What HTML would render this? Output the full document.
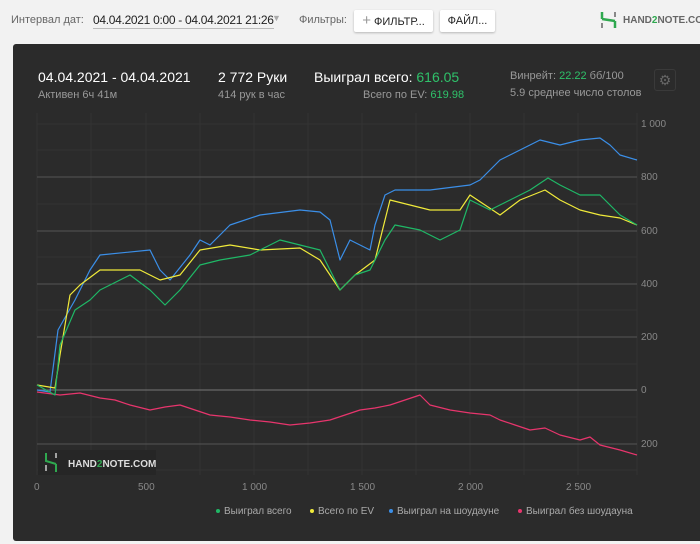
<!DOCTYPE html>
<html><head><meta charset="utf-8"><style>
body{margin:0;width:700px;height:544px;background:#f2f2f2;font-family:"Liberation Sans",sans-serif;position:relative;overflow:hidden}
.a{position:absolute;white-space:nowrap}
.btn{position:absolute;background:#fff;border-radius:2px;box-shadow:0 1px 2px rgba(0,0,0,.25);font-size:11px;color:#222;height:22px;line-height:22px;text-align:center}
.panel{position:absolute;left:13px;top:44px;width:690px;height:497px;background:#2b2b2b;border-radius:3px}
.g{color:#2fc16a}
</style></head><body>
<div class="a" style="left:11px;top:14px;font-size:11px;color:#666">Интервал дат:</div>
<div class="a" style="left:93px;top:13px;font-size:12px;color:#222;border-bottom:1px solid #bbb;padding-bottom:1px;letter-spacing:-0.3px">04.04.2021 0:00 - 04.04.2021 21:26</div>
<div class="a" style="left:272px;top:13px;font-size:9px;color:#aaa">▼</div>
<div class="a" style="left:299px;top:14px;font-size:11px;color:#666">Фильтры:</div>
<div class="btn" style="left:354px;top:10px;width:79px"><span style="color:#999;font-size:15px">+</span> ФИЛЬТР...</div>
<div class="btn" style="left:440px;top:10px;width:55px">ФАЙЛ...</div>
<svg class="a" style="left:600px;top:11px" width="18" height="18" viewBox="0 0 18 18"><path d="M2 1v7M2 8h0L15 10M15 10v7" stroke="#2fa84f" stroke-width="2.5" fill="none"/><path d="M2 12v5M15 1v5" stroke="#888" stroke-width="2"/></svg>
<div class="a" style="left:623px;top:15px;font-size:10px;color:#666;font-weight:bold">HAND<span style="color:#2fa84f">2</span>NOTE.COM</div>
<div class="panel"></div>
<div class="a" style="left:38px;top:69px;font-size:14px;color:#fff">04.04.2021 - 04.04.2021</div>
<div class="a" style="left:38px;top:89px;font-size:11px;color:#999">Активен 6ч 41м</div>
<div class="a" style="left:218px;top:69px;font-size:14px;color:#fff">2 772 Руки</div>
<div class="a" style="left:218px;top:89px;font-size:11px;color:#999">414 рук в час</div>
<div class="a" style="left:314px;top:69px;font-size:14px;color:#fff">Выиграл всего: <span class="g">616.05</span></div>
<div class="a" style="left:363px;top:89px;font-size:11px;color:#999">Всего по EV: <span class="g">619.98</span></div>
<div class="a" style="left:510px;top:70px;font-size:11px;color:#999">Винрейт: <span class="g">22.22</span> бб/100</div>
<div class="a" style="left:510px;top:87px;font-size:11px;color:#999">5.9 среднее число столов</div>
<div class="a" style="left:654px;top:69px;width:20px;height:20px;border:1px solid #3a3a3a;border-radius:3px;color:#666;font-size:14px;text-align:center;line-height:20px">⚙</div>
<svg class="a" style="left:0;top:0" width="700" height="544">
<g stroke="#333" stroke-width="1">
<path d="M37 150H637M37 204H637M37 257H637M37 310H637M37 364H637M37 417H637M37 470H637M37 124H637"/>
<path d="M37 113V475M146 113V475M254 113V475M362 113V475M470 113V475M578 113V475M637 113V475M91 113V475M200 113V475M308 113V475M416 113V475M524 113V475"/>
</g>
<g stroke="#555" stroke-width="1"><path d="M37 177H637M37 231H637M37 284H637M37 337H637M37 444H637"/><path d="M37 390H637" stroke="#777"/></g>
<g fill="#888" font-size="10" font-family="Liberation Sans">
<text x="641" y="127">1 000</text><text x="641" y="180">800</text><text x="641" y="234">600</text><text x="641" y="287">400</text><text x="641" y="340">200</text><text x="641" y="393">0</text><text x="641" y="447">200</text>
<text x="34" y="490">0</text><text x="138" y="490">500</text><text x="242" y="490">1 000</text><text x="350" y="490">1 500</text><text x="458" y="490">2 000</text><text x="566" y="490">2 500</text>
</g>
<rect x="38" y="450" width="118" height="25" fill="#262626"/>
<path d="M46 453v8L56 464M56 464v8" stroke="#2fa84f" stroke-width="2" fill="none"/><path d="M46 465v6M56 453v5" stroke="#ccc" stroke-width="1.5"/>
<text x="68" y="467" fill="#ddd" font-size="10" font-weight="bold" font-family="Liberation Sans">HAND<tspan fill="#2fa84f">2</tspan>NOTE.COM</text>
<g fill="none" stroke-width="1.2" stroke-linejoin="round">
<polyline stroke="#e8356d" points="37,392 60,395 80,393 100,398 115,400 130,405 150,410 165,407 180,405 210,415 230,417 250,420 270,422 290,425 310,423 330,420 345,415 360,410 375,408 390,405 405,400 420,395 430,405 450,410 470,413 490,415 500,420 515,425 530,430 545,428 560,435 580,440 590,437 600,445 620,450 637,455"/>
<polyline stroke="#3b8fe8" points="37,390 50,392 58,330 75,300 90,270 100,255 150,250 160,270 170,280 190,255 200,240 210,245 230,225 260,215 300,210 320,212 330,220 340,260 350,240 370,250 375,225 385,195 395,190 430,190 470,185 480,180 490,170 500,160 520,150 540,140 560,145 580,140 600,138 610,145 620,155 637,160"/>
<polyline stroke="#f0ea3a" points="37,385 55,388 60,355 70,295 80,285 100,270 140,270 160,280 180,275 200,250 230,245 260,250 300,248 320,260 340,290 355,275 375,260 390,200 410,205 430,210 460,210 470,195 500,215 520,200 545,190 560,200 580,210 600,215 620,218 637,225"/>
<polyline stroke="#1fb866" points="37,385 55,395 60,345 75,310 90,300 100,290 130,275 150,290 165,305 180,290 200,265 220,260 250,255 280,240 300,245 320,250 330,270 340,290 355,275 370,270 385,240 395,225 420,230 440,240 460,230 470,200 490,210 510,200 530,190 548,178 560,185 580,195 600,195 620,215 637,225"/>
</g>
<g font-size="10" fill="#aaa" font-family="Liberation Sans">
<circle cx="218" cy="511" r="2" fill="#1fb866"/><text x="224" y="514">Выиграл всего</text>
<circle cx="312" cy="511" r="2" fill="#f0ea3a"/><text x="318" y="514">Всего по EV</text>
<circle cx="391" cy="511" r="2" fill="#3b8fe8"/><text x="397" y="514">Выиграл на шоудауне</text>
<circle cx="520" cy="511" r="2" fill="#e8356d"/><text x="526" y="514">Выиграл без шоудауна</text>
</g>
</svg>
</body></html>
